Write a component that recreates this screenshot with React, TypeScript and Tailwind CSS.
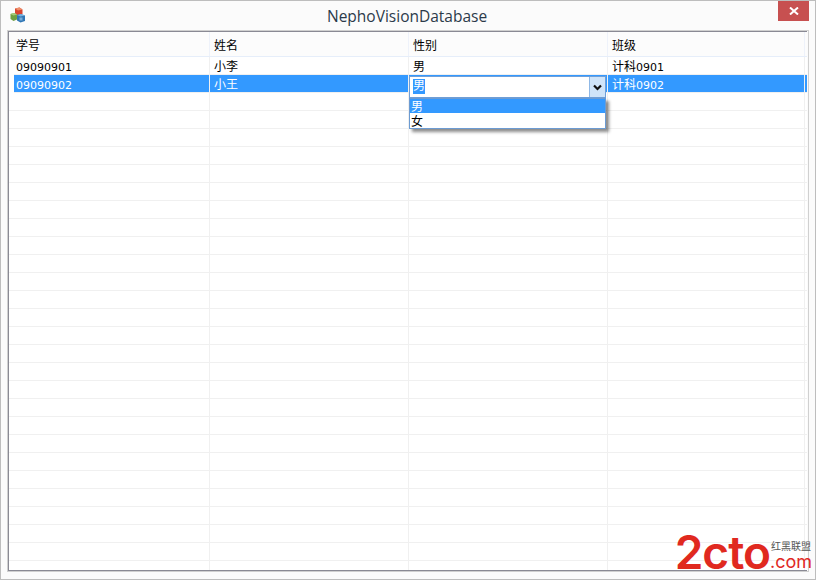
const FONT = "font-['DejaVu_Sans','Noto_Sans_CJK_SC',sans-serif]";

const headers = ["学号", "姓名", "性别", "班级"];
const emptyRows = Array.from({ length: 27 }, (_, i) => i);

// columns: cell widths follow the grid lines at x=209, 408, 607
const COLS = "grid grid-cols-[196px_199px_199px_197px]";

function AppIcon() {
  return (
    <svg width="16" height="16" viewBox="0 0 16 16">
      <path d="M5 1.5 L9.5 0.5 L12.5 2.5 L12.5 7 L8 8.5 L5 6.5 Z" fill="#d8432f" />
      <path d="M5 1.5 L9.5 0.5 L12.5 2.5 L8 3.5 Z" fill="#ee8f6a" />
      <path d="M0.5 7 L4 6 L7 7.5 L7 12.5 L3.5 14 L0.5 12 Z" fill="#6fa043" />
      <path d="M0.5 7 L4 6 L7 7.5 L3.5 8.5 Z" fill="#a6cc7c" />
      <path d="M7 8 L11 7 L15 8.5 L15 14 L10.5 15.5 L7 13.5 Z" fill="#2f76b5" />
      <path d="M7 8 L11 7 L15 8.5 L10.5 9.5 Z" fill="#78b0dc" />
      <path d="M9.5 10.5 h3 v3 h-3z" fill="#a9d0ee" opacity="0.6" />
    </svg>
  );
}

// digits sit at 11px next to 12px CJK, as the old bitmap UI font does
function Mixed({ text }: { text?: string }) {
  if (!text) return null;
  return (
    <>
      {text.split(/(\d+)/).map((part, i) =>
        /\d/.test(part) ? (
          <span key={i} className="text-[11px]">{part}</span>
        ) : (
          <span key={i}>{part}</span>
        ),
      )}
    </>
  );
}

function Row({ cells, className = "" }: { cells?: string[]; className?: string }) {
  return (
    <div className={`${COLS} h-[18px] border-b border-[#f0f0f0] ${className}`}>
      {[0, 1, 2, 3].map((i) => (
        <div
          key={i}
          className={`h-[17px] border-r border-[#f0f0f0] text-[12px] leading-[20px] whitespace-nowrap ${i === 0 ? "pl-[2px]" : "pl-[4px]"}`}
        >
          <Mixed text={cells?.[i]} />
        </div>
      ))}
    </div>
  );
}

export default function App() {
  return (
    <div className={`${FONT} relative flex h-[580px] w-[816px] flex-col overflow-hidden border border-[#bdbdbd] bg-[#fbfbfb] text-black`}>
      {/* Title bar */}
      <div className="flex h-[29px] shrink-0 items-start pl-[9px]">
        <div className="pt-[6px]">
          <AppIcon />
        </div>
        <div className="flex-1 pl-[301px] pt-[5px] font-['Open_Sans',sans-serif] text-[15.5px] leading-[20px] text-[#2b3a4a]">
          NephoVisionDatabase
        </div>
        <div className="mr-[6px] flex h-[20px] w-[31px] items-center justify-center bg-[#c75050]">
          <svg width="10" height="8" viewBox="0 0 10 8">
            <path d="M1 0.5 L9 7.5 M9 0.5 L1 7.5" stroke="#fff" strokeWidth="2" />
          </svg>
        </div>
      </div>

      {/* Data grid */}
      <div className="mx-[6px] mb-[7px] min-h-0 flex-1 border border-[#d0d0d0] pr-[1px]">
        <div className="relative h-full overflow-hidden border-[1px] border-r-0 border-b-[#8a8a94] border-l-[#8a8a94] border-t-[#8a8a94] bg-white pl-[5px]">
          {/* Header */}
          <div className={`${COLS} -ml-[5px] h-[25px] border-b border-[#e6eefa] bg-[#fcfcfc] pl-[5px]`}>
            {headers.map((h, i) => (
              <div
                key={h}
                className={`border-r border-[#eef2fa] pt-[5px] text-[12px] leading-[19px] ${i === 0 ? "pl-[2px]" : "pl-[4px]"}`}
              >
                {h}
              </div>
            ))}
          </div>

          <Row cells={["09090901", "小李", "男", "计科0901"]} />
          <Row cells={["09090902", "小王", "", "计科0902"]} className="bg-[#3399ff] text-white" />
          {emptyRows.map((i) => (
            <Row key={i} className="-ml-[5px] pl-[5px]" />
          ))}

          {/* Combo editor in the selected row */}
          <div className="absolute left-[400px] top-[44px] flex h-[22px] w-[197px] border border-[#6f9fd8] bg-white text-[12px] leading-[20px]">
            <span className="ml-[3px] mt-[2px] h-[15px] bg-[#3399ff] leading-[15px] text-white">男</span>
            <div className="ml-auto flex w-[16px] items-center justify-center border-l border-[#8fb8e6] bg-[#cfe4f9]">
              <svg width="9" height="7" viewBox="0 0 9 7">
                <path d="M1 1.5 L4.5 5 L8 1.5" stroke="#111" strokeWidth="2.2" fill="none" />
              </svg>
            </div>
          </div>

          {/* Open dropdown list */}
          <div className="absolute left-[400px] top-[66px] h-[31px] w-[197px] border border-[#6c9bd2] bg-white text-[12px] leading-[15px] shadow-[3px_3px_3px_rgba(0,0,0,0.45)]">
            <div className="h-[14px] bg-[#3399ff] pl-[1px] pt-[1px] text-white">男</div>
            <div className="h-[15px] pl-[1px] pt-[2px]">女</div>
          </div>
        </div>
      </div>

      {/* Watermark */}
      <div className="absolute bottom-[7px] right-[3px] flex items-end text-[#e0291f]">
        <span className="font-['Inter',sans-serif] text-[46px] font-semibold leading-[40px] tracking-[-1px]">2cto</span>
        <div className="flex flex-col items-center pb-[1px]">
          <span className="text-[10px] leading-[12px] text-[#555]">红黑联盟</span>
          <span className="font-['Inter',sans-serif] text-[18px] leading-[18px]">.com</span>
        </div>
      </div>
    </div>
  );
}
